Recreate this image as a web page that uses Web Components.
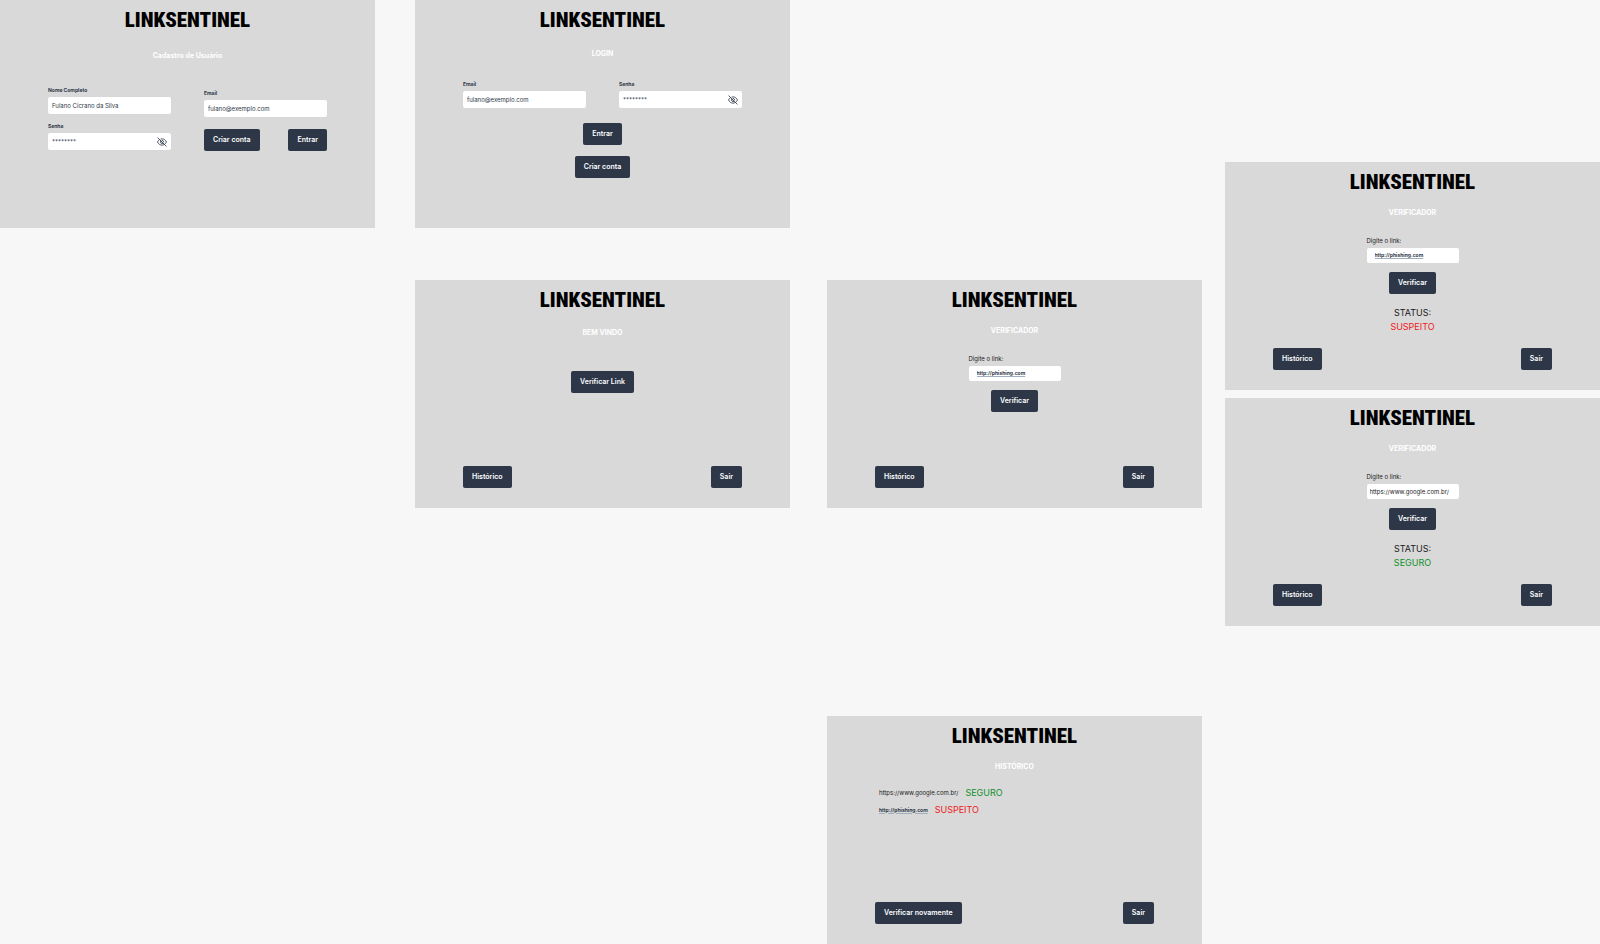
<!DOCTYPE html>
<html lang="pt-BR">
<head>
<meta charset="utf-8">
<meta name="viewport" content="width=device-width, initial-scale=1">
<title>LinkSentinel</title>
<style>
  body { margin: 0; background: #f7f7f7; color: #2d3748; font-family: Inter, "Liberation Sans", sans-serif; }
</style>
</head>
<body>
<ls-board>
  <ls-column>
    <ls-screen heading="Cadastro de Usuário" style="--heading-gap: 18px; --content-gap: 24px">
      <ls-pair>
        <ls-stack style="--gap: 8px">
          <ls-field label="Nome Completo" value="Fulano Cicrano da Silva"></ls-field>
          <ls-field label="Senha" value="********" secret></ls-field>
        </ls-stack>
        <ls-stack style="--gap: 12px; --top: 3px">
          <ls-field label="Email" value="fulano@exemplo.com"></ls-field>
          <ls-row><ls-button>Criar conta</ls-button><ls-button>Entrar</ls-button></ls-row>
        </ls-stack>
      </ls-pair>
    </ls-screen>
  </ls-column>

  <ls-column style="--before: 40px; --gap: 52px">
    <ls-screen heading="LOGIN" style="--heading-gap: 16px; --content-gap: 20px">
      <ls-stack style="--gap: 15px">
        <ls-pair>
          <ls-field label="Email" value="fulano@exemplo.com"></ls-field>
          <ls-field label="Senha" value="********" secret></ls-field>
        </ls-pair>
        <ls-stack style="--gap: 11px; --align: center">
          <ls-button>Entrar</ls-button>
          <ls-button>Criar conta</ls-button>
        </ls-stack>
      </ls-stack>
    </ls-screen>
    <ls-screen heading="BEM VINDO" style="--heading-gap: 15px; --content-gap: 32px">
      <ls-stack style="--align: center"><ls-button>Verificar Link</ls-button></ls-stack>
      <ls-row slot="footer"><ls-button>Histórico</ls-button><ls-button>Sair</ls-button></ls-row>
    </ls-screen>
  </ls-column>

  <ls-column style="--before: 37px; --top: 280px; --gap: 208px">
    <ls-screen heading="VERIFICADOR">
      <ls-checker url="http://phishing.com" linked></ls-checker>
      <ls-row slot="footer"><ls-button>Histórico</ls-button><ls-button>Sair</ls-button></ls-row>
    </ls-screen>
    <ls-screen heading="HISTÓRICO" style="--content-gap: 11px">
      <ls-history></ls-history>
      <ls-row slot="footer"><ls-button>Verificar novamente</ls-button><ls-button>Sair</ls-button></ls-row>
    </ls-screen>
  </ls-column>

  <ls-column style="--before: 23px; --top: 162px; --gap: 8px">
    <ls-screen heading="VERIFICADOR">
      <ls-checker url="http://phishing.com" linked status="SUSPEITO"></ls-checker>
      <ls-row slot="footer"><ls-button>Histórico</ls-button><ls-button>Sair</ls-button></ls-row>
    </ls-screen>
    <ls-screen heading="VERIFICADOR">
      <ls-checker url="https://www.google.com.br/" status="SEGURO"></ls-checker>
      <ls-row slot="footer"><ls-button>Histórico</ls-button><ls-button>Sair</ls-button></ls-row>
    </ls-screen>
  </ls-column>
</ls-board>

<script>
const define = (name, render) => customElements.define(name, class extends HTMLElement {
  connectedCallback() {
    if (this.shadowRoot) return;
    const template = document.createElement('template');
    template.innerHTML = render(this);
    this.attachShadow({ mode: 'open' }).append(template.content.cloneNode(true));
  }
});

/* Layout */
define('ls-board', () => `
  <style>:host { display: block } main { display: flex; align-items: flex-start }</style>
  <main><slot></slot></main>`);

define('ls-column', () => `
  <style>
    :host { display: block; flex: 1 1 0; min-width: 0; margin-left: var(--before, 0px) }
    .screens { display: flex; flex-direction: column; gap: var(--gap, 0px); padding-top: var(--top, 0px) }
    ::slotted(*) { --top: 0px }
  </style><div class="screens"><slot></slot></div>`);

define('ls-stack', () => `
  <style>
    :host { display: flex; flex-direction: column; gap: var(--gap, 0px); align-items: var(--align, stretch);
            padding-top: var(--top, 0px) }
  </style><slot></slot>`);

define('ls-pair', () => `
  <style>
    :host { display: grid; grid-template-columns: 1fr 1fr; column-gap: 33px; align-items: start }
  </style><slot></slot>`);

define('ls-row', () => `
  <style>:host { display: flex; justify-content: space-between }</style><slot></slot>`);

/* One application screen: logo, heading, content and a row of footer buttons */
define('ls-screen', el => `
  <style>
    :host { display: block }
    section { display: flex; flex-direction: column; box-sizing: border-box; min-height: 228px;
              padding: 8px 48px 20px; background: #d9d9d9 }
    h1 { margin: 0; text-align: center; color: #000;
         font: 900 21px/24px "Roboto Condensed", Roboto, sans-serif }
    h2 { margin: var(--heading-gap, 13px) 0 var(--content-gap, 18px); text-align: center;
         color: #fff; font-size: 7px; line-height: 12px; font-weight: 700 }
    .content { flex: 1 }
  </style>
  <section>
    <h1>LINKSENTINEL</h1>
    <h2>${el.getAttribute('heading')}</h2>
    <div class="content"><slot></slot></div>
    <slot name="footer"></slot>
  </section>`);

/* Controls */
define('ls-button', () => `
  <style>
    :host { display: block }
    button { display: block; height: 22px; margin: 0; padding: 0 9px; border: 0; border-radius: 2px;
             background: #2d3748; color: #fff; font: inherit; font-size: 7px; line-height: 22px;
             font-weight: 600; white-space: nowrap; cursor: pointer }
  </style>
  <button type="button"><slot></slot></button>`);

define('ls-field', el => `
  <style>
    :host { display: block }
    label { display: block; margin-bottom: 3px; font-size: 5px; line-height: 8px; font-weight: 700 }
    .box { display: flex; align-items: center; box-sizing: border-box; height: 17px; padding: 0 4px;
           border-radius: 2px; background: #fff; box-shadow: 0 0 1px #cbd5e0 }
    input { flex: 1; min-width: 0; padding: 0; border: 0; outline: 0; background: none; color: #2d3748;
            font: inherit; font-size: 6px; line-height: 12px; height: 12px }
    button { display: block; padding: 0; border: 0; background: none; color: #2d3748; cursor: pointer }
    svg { display: block; width: 10px; height: 10px }
  </style>
  <label for="field">${el.getAttribute('label')}</label>
  <div class="box">
    <input id="field" type="text" value="${el.getAttribute('value')}">
    ${el.hasAttribute('secret') ? `<button type="button" aria-label="Mostrar senha">
      <svg viewBox="0 0 24 24" fill="none" stroke="currentColor" stroke-width="2" stroke-linecap="round" stroke-linejoin="round">
        <path d="M2 2l20 20"/>
        <path d="M6 6C3.900 7.500 2.300 9.600 1.300 12c1.900 4.400 6 7.500 10.700 7.500 2 0 3.900-.5 5.500-1.500"/>
        <path d="M9.500 4.800C10.300 4.600 11.100 4.500 12 4.500c4.700 0 8.800 3.100 10.700 7.500-.6 1.400-1.400 2.600-2.400 3.700"/>
        <path d="M9 9.500a4 4 0 0 0 5.500 5.600"/>
        <path d="M12.500 8a4 4 0 0 1 3.500 3.500"/>
      </svg></button>` : ''}
  </div>`);

define('ls-verdict', el => `
  <style>
    :host { display: block; font-size: 9px; line-height: 14px;
            color: ${el.textContent.trim() === 'SEGURO' ? '#0f912b' : '#f01820'} }
  </style><slot></slot>`);

define('ls-checker', el => `
  <style>
    :host { display: flex; flex-direction: column; align-items: center }
    .field { width: 92px; margin-bottom: 9px }
    label { display: block; margin-bottom: 3px; color: #1a1a1a; font-size: 6px; line-height: 8px }
    input { display: block; box-sizing: border-box; width: 100%; height: 15px; padding: 0 3px; border: 0;
            border-radius: 2px; outline: 0; background: #fff; color: #1a1a1a; font: inherit;
            font-size: 6px; line-height: 15px }
    input.linked { padding: 0 8px; color: #2d3748; font-size: 5px; font-weight: 700;
                   text-decoration: underline 1px #a0aec0; text-underline-offset: 1px }
    .status { margin-top: 12px; text-align: center; color: #1a1a1a; font-size: 9px; line-height: 14px }
  </style>
  <div class="field">
    <label for="url">Digite o link:</label>
    <input id="url" type="text" class="${el.hasAttribute('linked') ? 'linked' : ''}" value="${el.getAttribute('url')}">
  </div>
  <ls-button>Verificar</ls-button>
  ${el.hasAttribute('status') ? `<div class="status">STATUS:<ls-verdict>${el.getAttribute('status')}</ls-verdict></div>` : ''}`);

define('ls-history', () => `
  <style>
    :host { display: block }
    ul { margin: 0; padding: 0 4px; list-style: none }
    li { display: flex; align-items: center; gap: 7px; height: 17px; color: #1a1a1a; font-size: 6px }
    a { color: #2d3748; font-size: 5px; font-weight: 700;
        text-decoration: underline 1px #a0aec0; text-underline-offset: 1px }
  </style>
  <ul>
    <li><span>https://www.google.com.br/</span><ls-verdict>SEGURO</ls-verdict></li>
    <li><a href="#historico">http://phishing.com</a><ls-verdict>SUSPEITO</ls-verdict></li>
  </ul>`);
</script>
</body>
</html>
